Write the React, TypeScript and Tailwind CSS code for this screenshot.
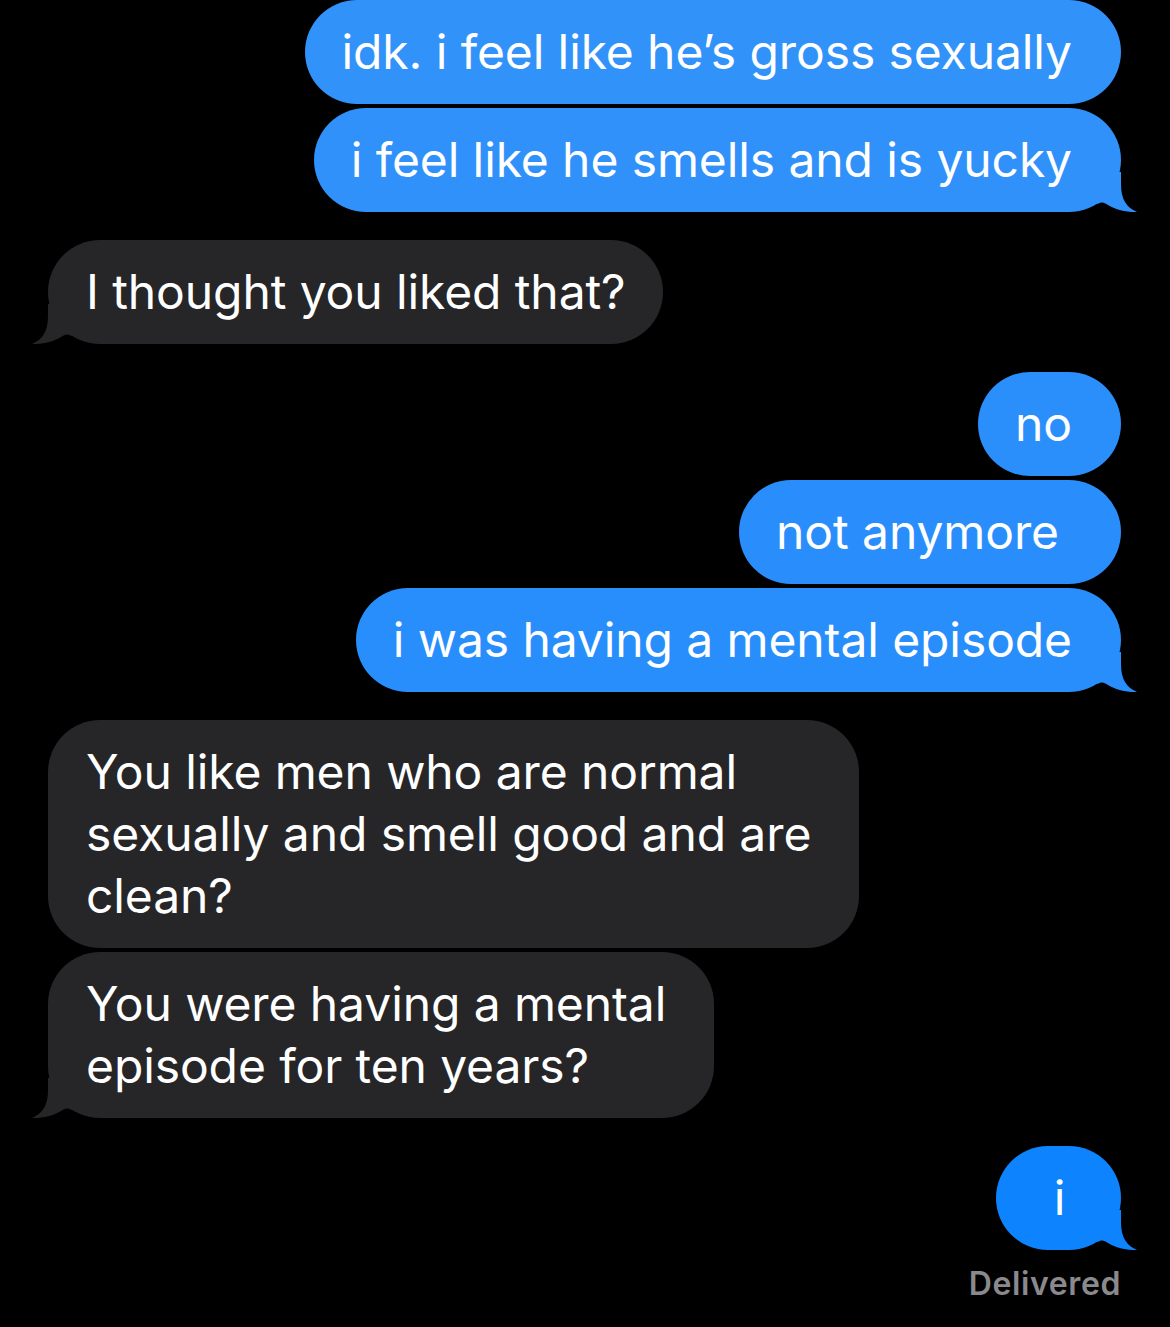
import React from "react";

type Msg = {
  from: "me" | "them";
  lines: string[];
  tail?: boolean;
  color?: string;
  gapTop?: boolean;
  pad?: string;
};

const messages: Msg[] = [
  { from: "me", lines: ["idk. i feel like he\u2019s gross sexually"], color: "#3192f9" },
  { from: "me", lines: ["i feel like he smells and is yucky"], tail: true, color: "#2f91f9" },
  { from: "them", lines: ["I thought you liked that?"], tail: true, gapTop: true },
  { from: "me", lines: ["no"], color: "#2a8ffb", gapTop: true },
  { from: "me", lines: ["not anymore"], color: "#298efb", pad: "pl-[37px] pr-[62px]" },
  { from: "me", lines: ["i was having a mental episode"], tail: true, color: "#288efb" },
  {
    from: "them",
    lines: ["You like men who are normal", "sexually and smell good and are", "clean?"],
    gapTop: true,
    pad: "pl-[38px] pr-[48px]",
  },
  {
    from: "them",
    lines: ["You were having a mental", "episode for ten years?"],
    tail: true,
    pad: "pl-[38px] pr-[48px]",
  },
  { from: "me", lines: ["i"], tail: true, color: "#0d84fe", gapTop: true, pad: "w-[125px] pl-[2px] pr-0 text-center" },
];

function Tail({ side, color }: { side: "left" | "right"; color: string }) {
  return (
    <svg
      width="40"
      height="40"
      viewBox="0 0 40 40"
      className={side === "right" ? "absolute -right-4 bottom-0" : "absolute -left-4 bottom-0 -scale-x-100"}
    >
      <path
        d="M0 0 L24 0 L24 12 C24 27 29 35 40 40 C31 40.5 19 38 11 33 C8 31 6 30.5 4 30.5 L0 32 Z"
        fill={color}
      />
    </svg>
  );
}

function Bubble({ msg, first }: { msg: Msg; first: boolean }) {
  const mine = msg.from === "me";
  const color = mine ? msg.color ?? "#2f91f9" : "#262628";
  const pad = msg.pad ?? (mine ? "pl-[37px] pr-[49px]" : "pl-[38px] pr-[37px]");
  const gap = first ? "mt-0" : msg.gapTop ? "mt-7" : "mt-1";
  return (
    <div className={`flex ${mine ? "justify-end" : "justify-start"} ${gap}`}>
      <div
        className={`relative whitespace-nowrap rounded-[52px] py-[21px] text-[48px] leading-[62px] text-white ${pad}`}
        style={{ backgroundColor: color }}
      >
        {msg.tail && <Tail side={mine ? "right" : "left"} color={color} />}
        <span className="relative">
          {msg.lines.map((l, i) => (
            <React.Fragment key={i}>
              {i > 0 && <br />}
              {l}
            </React.Fragment>
          ))}
        </span>
      </div>
    </div>
  );
}

export default function App() {
  return (
    <div className="min-h-[1327px] w-[1170px] bg-black pl-[48px] pr-[49px] font-['Inter','Noto_Sans',sans-serif] tracking-[-0.1px]">
      <div className="flex flex-col">
        {messages.map((m, i) => (
          <Bubble key={i} msg={m} first={i === 0} />
        ))}
      </div>
      <div className="mt-[14px] text-right text-[32px] font-semibold leading-[40px] tracking-[0.6px] text-[#8a8a8e]">
        Delivered
      </div>
    </div>
  );
}
